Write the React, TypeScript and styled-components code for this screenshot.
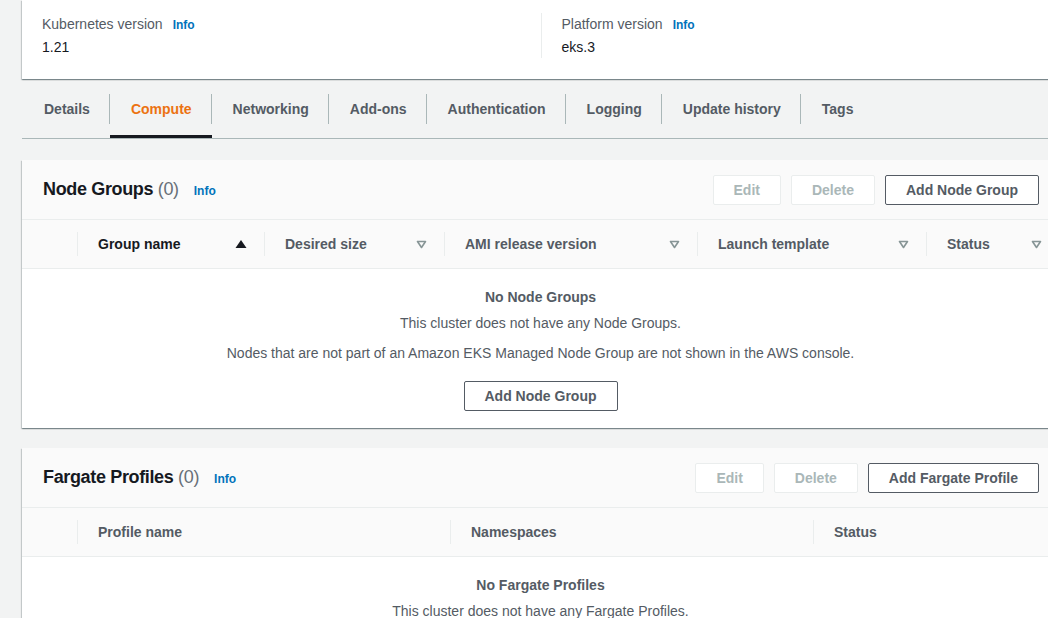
import React from "react";
import styled, { createGlobalStyle } from "styled-components";

const GlobalStyle = createGlobalStyle`
  html, body {
    margin: 0;
    padding: 0;
    background: #f2f3f3;
    overflow: hidden;
  }
  body {
    font-family: "Liberation Sans", Arial, sans-serif;
    font-size: 14px;
    color: #16191f;
  }
  * { box-sizing: border-box; }
`;

const Page = styled.div`
  padding-left: 22px;
  width: 1059px;
  display: flex;
  flex-direction: column;
`;

const cardShadow = `0 1px 1px 0 rgba(0,28,36,0.3), 1px 1px 1px 0 rgba(0,28,36,0.15), -1px 1px 1px 0 rgba(0,28,36,0.15)`;

const Card = styled.section<{ $gapTop?: number }>`
  background: #fff;
  box-shadow: ${cardShadow};
  margin-top: ${(p) => p.$gapTop ?? 0}px;
`;

const DetailGrid = styled.div`
  display: grid;
  grid-template-columns: 1fr 1fr;
  padding: 13px 0 21px;
  height: 79px;
`;

const DetailCell = styled.div<{ $divider?: boolean }>`
  padding: 0 20px;
  border-left: ${(p) => (p.$divider ? "1px solid #eaeded" : "none")};
  display: flex;
  flex-direction: column;
`;

const DetailLabel = styled.div`
  display: flex;
  align-items: center;
  gap: 10px;
  height: 22px;
  color: #545b64;
  font-size: 14px;
`;

const DetailValue = styled.div`
  margin-top: 1px;
  line-height: 22px;
  font-size: 14px;
  color: #16191f;
`;

const InfoLink = styled.a`
  color: #0073bb;
  font-weight: 700;
  font-size: 12px;
  text-decoration: none;
  position: relative;
  top: 1px;
`;

const TabBar = styled.nav`
  display: flex;
  margin-top: 15px;
  border-bottom: 1px solid #aab7b8;
`;

const Tab = styled.div<{ $active?: boolean }>`
  display: flex;
  padding-bottom: 11px;
  border-bottom: 3px solid ${(p) => (p.$active ? "#16191f" : "transparent")};
`;

const TabLabel = styled.span<{ $active?: boolean; $first?: boolean }>`
  height: 30px;
  line-height: 30px;
  padding: 0 20px 0 ${(p) => (p.$first ? 22 : 21)}px;
  margin-left: ${(p) => (p.$first ? 0 : -1)}px;
  border-left: ${(p) => (p.$first ? "none" : "1px solid #aab7b8")};
  font-weight: 700;
  font-size: 14px;
  color: ${(p) => (p.$active ? "#ec7211" : "#545b64")};
  white-space: nowrap;
`;

const PanelHeader = styled.header`
  display: flex;
  align-items: center;
  justify-content: space-between;
  height: 60px;
  padding: 0 20px 0 21px;
  background: #fafafa;
  border-bottom: 1px solid #eaeded;
`;

const TitleRow = styled.div`
  display: flex;
  align-items: center;
  gap: 15px;
`;

const Title = styled.h2`
  margin: 0;
  font-size: 18px;
  font-weight: 700;
  letter-spacing: -0.35px;
  color: #16191f;
  white-space: nowrap;
`;

const Count = styled.span`
  font-weight: 400;
  color: #687078;
`;

const Actions = styled.div`
  display: flex;
  gap: 10px;
`;

const Button = styled.button<{ disabled?: boolean }>`
  height: 30px;
  padding: 0 20px;
  border-radius: 2px;
  background: #fff;
  border: 1px solid ${(p) => (p.disabled ? "#eaeded" : "#545b64")};
  color: ${(p) => (p.disabled ? "#aab7b8" : "#545b64")};
  font-family: inherit;
  font-size: 14px;
  font-weight: 700;
  white-space: nowrap;
  cursor: ${(p) => (p.disabled ? "default" : "pointer")};
`;

const HeadRow = styled.div<{ $cols: string }>`
  display: grid;
  grid-template-columns: ${(p) => p.$cols};
  height: 49px;
  align-items: center;
  background: #fafafa;
  border-bottom: 1px solid #eaeded;
`;

const SelectCell = styled.div`
  height: 24px;
`;

const HeadCell = styled.div<{ $sorted?: boolean }>`
  display: flex;
  align-items: center;
  justify-content: space-between;
  height: 24px;
  padding: 0 17px 0 20px;
  border-left: 1px solid #eaeded;
  font-weight: 700;
  font-size: 14px;
  color: ${(p) => (p.$sorted ? "#16191f" : "#545b64")};
  white-space: nowrap;
`;

const Empty = styled.div`
  display: flex;
  flex-direction: column;
  align-items: center;
  padding: 17px 0;
  background: #fff;
`;

const EmptyTitle = styled.div`
  line-height: 22px;
  font-weight: 700;
  color: #545b64;
`;

const EmptyText = styled.p<{ $gap: number }>`
  margin: ${(p) => p.$gap}px 0 0;
  line-height: 22px;
  color: #545b64;
`;

const EmptyAction = styled.div`
  margin-top: 17px;
`;

const SortUp = () => (
  <svg width="12" height="10" viewBox="0 0 12 10">
    <path d="M6 1 L11.5 9 L0.5 9 Z" fill="#16191f" />
  </svg>
);

const SortDown = () => (
  <svg width="11" height="9" viewBox="0 0 11 9">
    <path d="M1.5 1.5 L9.5 1.5 L5.5 7.5 Z" fill="none" stroke="#879596" strokeWidth="1.6" strokeLinejoin="round" />
  </svg>
);

type Col = { label: string; sort?: "up" | "down" };

const TableHead: React.FC<{ cols: Col[]; widths: string }> = ({ cols, widths }) => (
  <HeadRow $cols={widths}>
    <SelectCell />
    {cols.map((c) => (
      <HeadCell key={c.label} $sorted={c.sort === "up"}>
        <span>{c.label}</span>
        {c.sort === "up" && <SortUp />}
        {c.sort === "down" && <SortDown />}
      </HeadCell>
    ))}
  </HeadRow>
);

const tabs = ["Details", "Compute", "Networking", "Add-ons", "Authentication", "Logging", "Update history", "Tags"];

export default function App() {
  return (
    <>
      <GlobalStyle />
      <Page>
        <Card>
          <DetailGrid>
            <DetailCell>
              <DetailLabel>
                Kubernetes version <InfoLink>Info</InfoLink>
              </DetailLabel>
              <DetailValue>1.21</DetailValue>
            </DetailCell>
            <DetailCell $divider>
              <DetailLabel>
                Platform version <InfoLink>Info</InfoLink>
              </DetailLabel>
              <DetailValue>eks.3</DetailValue>
            </DetailCell>
          </DetailGrid>
        </Card>

        <TabBar>
          {tabs.map((t, i) => (
            <Tab key={t} $active={t === "Compute"}>
              <TabLabel $first={i === 0} $active={t === "Compute"}>
                {t}
              </TabLabel>
            </Tab>
          ))}
        </TabBar>

        <Card $gapTop={21}>
          <PanelHeader>
            <TitleRow>
              <Title>
                Node Groups <Count>(0)</Count>
              </Title>
              <InfoLink>Info</InfoLink>
            </TitleRow>
            <Actions>
              <Button disabled>Edit</Button>
              <Button disabled>Delete</Button>
              <Button>Add Node Group</Button>
            </Actions>
          </PanelHeader>
          <TableHead
            widths="55px 187px 180px 253px 229px 1fr"
            cols={[
              { label: "Group name", sort: "up" },
              { label: "Desired size", sort: "down" },
              { label: "AMI release version", sort: "down" },
              { label: "Launch template", sort: "down" },
              { label: "Status", sort: "down" },
            ]}
          />
          <Empty>
            <EmptyTitle>No Node Groups</EmptyTitle>
            <EmptyText $gap={4}>This cluster does not have any Node Groups.</EmptyText>
            <EmptyText $gap={8}>
              Nodes that are not part of an Amazon EKS Managed Node Group are not shown in the AWS console.
            </EmptyText>
            <EmptyAction>
              <Button>Add Node Group</Button>
            </EmptyAction>
          </Empty>
        </Card>

        <Card $gapTop={20}>
          <PanelHeader>
            <TitleRow>
              <Title>
                Fargate Profiles <Count>(0)</Count>
              </Title>
              <InfoLink>Info</InfoLink>
            </TitleRow>
            <Actions>
              <Button disabled>Edit</Button>
              <Button disabled>Delete</Button>
              <Button>Add Fargate Profile</Button>
            </Actions>
          </PanelHeader>
          <TableHead
            widths="55px 373px 363px 1fr"
            cols={[{ label: "Profile name" }, { label: "Namespaces" }, { label: "Status" }]}
          />
          <Empty>
            <EmptyTitle>No Fargate Profiles</EmptyTitle>
            <EmptyText $gap={4}>This cluster does not have any Fargate Profiles.</EmptyText>
          </Empty>
        </Card>
      </Page>
    </>
  );
}
